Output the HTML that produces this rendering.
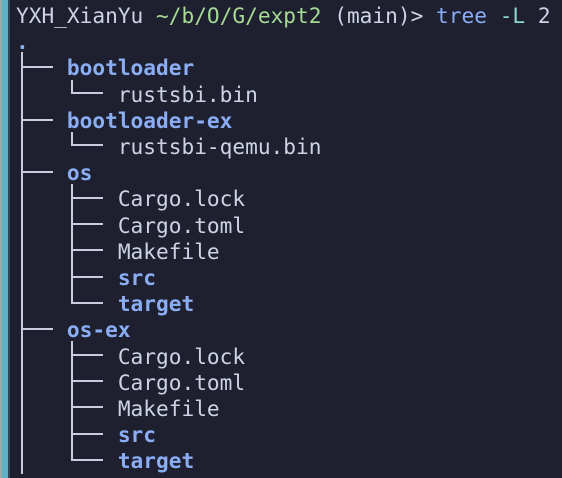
<!DOCTYPE html><html><head><style>
body{margin:0;width:562px;height:478px;overflow:hidden;background:#1e2030;position:relative}
.bar{position:absolute;left:0;top:0;width:2px;height:478px;background:#9aa}
.bar2{position:absolute;left:2px;top:0;width:6px;height:478px;background:#5cb4c6}
.bar3{position:absolute;left:8px;top:0;width:2px;height:478px;background:#2b4a55}
pre{position:absolute;left:16px;top:3px;margin:0;font-family:"DejaVu Sans Mono","Liberation Mono",monospace;font-size:21.15px;line-height:26.2px;color:#cdd3e4}
.g{color:#a6da95}.b{color:#8aadf4}.d{color:#8aadf4;font-weight:bold}.t{color:#8bd5ca}
.l{position:absolute;background:#c8cde0}
</style></head><body><div class="bar"></div><div class="bar2"></div><div class="bar3"></div>
<pre>YXH_XianYu <span class="g">~/b/O/G/expt2</span> (main)&gt; <span class="b">tree</span> <span class="t">-L</span> 2
<span class="d">.</span>
    <span class="d">bootloader</span>
        rustsbi.bin
    <span class="d">bootloader-ex</span>
        rustsbi-qemu.bin
    <span class="d">os</span>
        Cargo.lock
        Cargo.toml
        Makefile
        <span class="d">src</span>
        <span class="d">target</span>
    <span class="d">os-ex</span>
        Cargo.lock
        Cargo.toml
        Makefile
        <span class="d">src</span>
        <span class="d">target</span></pre>
<!-- main trunk -->
<div class="l" style="left:21px;top:52px;width:2px;height:422px"></div>
<div class="l" style="left:21px;top:66px;width:32px;height:2px"></div>
<div class="l" style="left:21px;top:119px;width:32px;height:2px"></div>
<div class="l" style="left:21px;top:171px;width:32px;height:2px"></div>
<div class="l" style="left:21px;top:328px;width:32px;height:2px"></div>
<!-- sub trunks -->
<div class="l" style="left:71px;top:80px;width:2px;height:14px"></div>
<div class="l" style="left:71px;top:92px;width:32px;height:2px"></div>
<div class="l" style="left:71px;top:132px;width:2px;height:14px"></div>
<div class="l" style="left:71px;top:144px;width:32px;height:2px"></div>
<div class="l" style="left:71px;top:184px;width:2px;height:120px"></div>
<div class="l" style="left:71px;top:197px;width:32px;height:2px"></div>
<div class="l" style="left:71px;top:223px;width:32px;height:2px"></div>
<div class="l" style="left:71px;top:249px;width:32px;height:2px"></div>
<div class="l" style="left:71px;top:276px;width:32px;height:2px"></div>
<div class="l" style="left:71px;top:302px;width:32px;height:2px"></div>
<div class="l" style="left:71px;top:341px;width:2px;height:120px"></div>
<div class="l" style="left:71px;top:354px;width:32px;height:2px"></div>
<div class="l" style="left:71px;top:380px;width:32px;height:2px"></div>
<div class="l" style="left:71px;top:406px;width:32px;height:2px"></div>
<div class="l" style="left:71px;top:433px;width:32px;height:2px"></div>
<div class="l" style="left:71px;top:459px;width:32px;height:2px"></div>
</body></html>
